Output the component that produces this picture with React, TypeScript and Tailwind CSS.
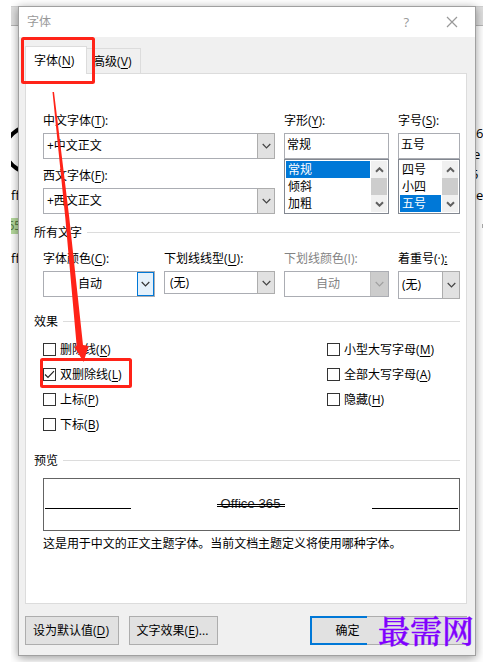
import type { ReactNode } from 'react';
import clsx from 'clsx';

interface LabelProps {
  text: string;
  hotkey?: string;
  suffix?: string;
}

interface ComboProps {
  value: string;
  className: string;
  valueClass?: string;
  state?: 'normal' | 'focused' | 'disabled';
}

interface ListProps {
  items: string[];
  selected: number;
  className: string;
}

interface CheckProps extends LabelProps {
  checked?: boolean;
}

function Label({ text, hotkey, suffix = ')' }: LabelProps) {
  return (
    <span className="whitespace-nowrap">
      {text}
      {hotkey && (
        <span className="tracking-[0.1px]">
          (<span className="underline underline-offset-2">{hotkey}</span>{suffix}
        </span>
      )}
    </span>
  );
}

function Chevron({ up = false, bold = false }: { up?: boolean; bold?: boolean }) {
  return (
    <svg width="9" height="6" viewBox="0 0 9 6" fill="none" stroke="currentColor" strokeWidth={bold ? 2 : 1.2}>
      <path d={up ? 'M1 4.8 L4.5 1.3 L8 4.8' : bold ? 'M1 1.2 L4.5 4.7 L8 1.2' : 'M0.7 1 L4.5 4.8 L8.3 1'} />
    </svg>
  );
}

function Combo({ value, className, valueClass = 'pl-[3px]', state = 'normal' }: ComboProps) {
  return (
    <div
      className={clsx(
        'flex border border-[#abadb3] bg-white',
        state === 'disabled' && 'text-[#838383]',
        className
      )}
    >
      <div className={clsx('flex flex-1 items-center', valueClass)}>{value}</div>
      <div
        className={clsx(
          'flex shrink-0 items-center justify-center',
          state === 'normal' && '-my-px -mr-px w-[18px] border border-[#adadad] bg-[#e1e1e1] text-[#444]',
          state === 'focused' && 'w-[17px] border border-[#0078d7] bg-[#e5f1fb] text-[#333]',
          state === 'disabled' && 'w-[18px] border-l border-[#bfbfbf] bg-[#ccc] text-[#a0a0a0]'
        )}
      >
        <Chevron />
      </div>
    </div>
  );
}

function ListBox({ items, selected, className }: ListProps) {
  return (
    <div className={clsx('flex h-[55px] border border-[#828790] bg-white p-px', className)}>
      <div className="flex-1 pr-px">
        {items.map((item, i) => (
          <div
            key={item}
            className={clsx('h-[17px] pl-0.5 leading-[17px]', i === selected && 'bg-[#0078d7] text-white')}
          >
            {item}
          </div>
        ))}
      </div>
      <div className="w-4 bg-[#f0f0f0] text-[#606060]">
        <div className="flex h-[17px] items-center justify-center pt-px"><Chevron up bold /></div>
        <div className="h-[17px] bg-[#cdcdcd]" />
        <div className="flex h-[17px] items-center justify-center"><Chevron bold /></div>
      </div>
    </div>
  );
}

function Section({ title, className }: { title: string; className?: string }) {
  return (
    <div className={clsx('flex h-4 items-center gap-[5px] pl-2 pr-[6px]', className)}>
      <span className="shrink-0 pt-[2px]">{title}</span>
      <div className="h-px flex-1 bg-[#dcdcdc]" />
    </div>
  );
}

function Check({ checked, ...label }: CheckProps) {
  return (
    <div className="flex h-[25px] items-center gap-1">
      <div className="flex size-[13px] items-center justify-center border border-[#333] bg-white">
        {checked && (
          <svg width="11" height="11" viewBox="0 0 11 11" fill="none" stroke="#222" strokeWidth="1.2">
            <path d="M1 5.5 L4 8.4 L10 2.2" />
          </svg>
        )}
      </div>
      <Label {...label} />
    </div>
  );
}

function Button({ children, className }: { children: ReactNode; className: string }) {
  return (
    <button className={clsx('flex h-[29px] items-center justify-center bg-[#e1e1e1]', className)}>
      {children}
    </button>
  );
}

function Backdrop() {
  return (
    <>
      <div className="absolute inset-x-0 top-0 h-5 border-y border-t-[#d0d0d0] border-b-[#b5b5b5] bg-[#dedede]" />
      <svg className="absolute left-0 top-[114px]" width="8" height="60" fill="none" stroke="#000" strokeWidth="4">
        <path d="M-2 18 Q2 12 10 8" />
        <path d="M-2 41 Q2 47 10 51" />
      </svg>
      <div className="absolute left-0 top-[181px] text-[13px]">ff</div>
      <div className="absolute left-0 top-[212px] h-4 w-2 bg-[#b5d99c]">
        <span className="absolute -left-1 -top-px text-[13px] tracking-tight text-[#567a43]">65</span>
      </div>
      <div className="absolute left-0 top-[244px] text-[13px]">ff</div>
      <div className="absolute left-[458px] top-[119px] text-[13px] tracking-tight">16</div>
      <div className="absolute left-[462px] top-[140px] text-[13px]">e</div>
      <div className="absolute left-[460px] top-[160px] text-[13px]">5</div>
      <div className="absolute left-[459px] top-[181px] text-[13px] tracking-tight">ce</div>
      <div className="absolute left-[471px] top-[218px] h-1 w-px bg-[#aaa]" />
    </>
  );
}

// Red boxes and arrow that point at the double strikethrough option
function Annotations() {
  return (
    <svg className="pointer-events-none absolute left-0 top-0" width="491" height="662" fill="none">
      <rect x="22.5" y="38.5" width="71" height="44" rx="1" stroke="#ff2318" strokeWidth="3" />
      <rect x="41.5" y="359.5" width="89" height="27" rx="1" stroke="#ff2318" strokeWidth="3" />
      <path d="M52.5 92 L54 92 L69.2 217 L83 345 L88.7 346 L83.5 362 L74.8 347.5 L76.6 345 L65.2 217 Z" fill="#ff2318" />
    </svg>
  );
}

export default function App() {
  return (
    <div className="relative h-[662px] w-[491px] overflow-hidden bg-white font-['Open_Sans','Noto_Sans_CJK_SC',sans-serif] text-xs leading-4 text-black">
      <div className="relative ml-[11px] h-[662px] w-[472px] overflow-hidden pl-[7px] pt-[6px]">
        <div className="absolute inset-x-0 top-[6px]">
          <Backdrop />
        </div>

        <div className="relative flex h-[650px] w-[458px] flex-col border border-[#a0a0a0] bg-[#f0f0f0] shadow-[0_2px_9px_rgba(0,0,0,0.4)]">
          <div className="flex h-[30px] shrink-0 items-center bg-white pl-2 text-[#999]">
            <span className="flex-1">字体</span>
            <span className="mr-[37px] text-[13px]">?</span>
            <svg className="mr-[17px]" width="12" height="12" viewBox="0 0 12 12" stroke="#999" strokeWidth="1.2">
              <path d="M1 1 L11 11 M11 1 L1 11" />
            </svg>
          </div>

          {/* Tabs */}
          <div className="flex h-9 items-end pl-[6px]">
            <div className="relative z-10 -mb-px flex h-7 w-[62px] items-center border border-b-0 border-[#dcdcdc] bg-white pl-2">
              <Label text="字体" hotkey="N" />
            </div>
            <div className="flex h-[25px] w-[54px] items-center border border-b-0 border-l-0 border-[#dcdcdc] pl-[6px] pt-[2px]">
              <Label text="高级" hotkey="V" />
            </div>
          </div>

          <div className="mx-[6px] h-[531px] w-[442px] shrink-0 border border-[#dcdcdc] bg-white">
            <div className="flex pl-[17px] pt-[39px]">
              <div className="mr-[9px] w-[232px]">
                <div className="h-5"><Label text="中文字体" hotkey="T" suffix="):" /></div>
                <Combo value="+中文正文" className="h-[26px]" valueClass="pl-[3px] pb-px" />
                <div className="h-[29px] pt-[9px]"><Label text="西文字体" hotkey="F" suffix="):" /></div>
                <Combo value="+西文正文" className="h-[26px]" valueClass="pl-[3px] pb-px" />
              </div>
              <div className="mr-[9px] w-[105px]">
                <div className="h-5"><Label text="字形" hotkey="Y" suffix="):" /></div>
                <div className="flex h-[26px] items-center border border-[#abadb3] pb-[2px] pl-[2px]">常规</div>
                <ListBox items={['常规', '倾斜', '加粗']} selected={0} className="w-[105px]" />
              </div>
              <div className="w-[62px]">
                <div className="h-5"><Label text="字号" hotkey="S" suffix="):" /></div>
                <div className="flex h-[26px] items-center border border-[#abadb3] pb-[2px] pl-[2px]">五号</div>
                <ListBox items={['四号', '小四', '五号']} selected={2} className="w-[62px]" />
              </div>
            </div>

            <Section title="所有文字" className="mt-[10px]" />
            <div className="flex items-start pl-[17px] pt-[11px]">
              <div className="mr-[9px] w-[112px]">
                <div className="h-5"><Label text="字体颜色" hotkey="C" suffix="):" /></div>
                <Combo value="自动" className="h-[26px]" valueClass="pl-[34px]" state="focused" />
              </div>
              <div className="mr-[9px] w-[111px]">
                <div className="h-5"><Label text="下划线线型" hotkey="U" suffix="):" /></div>
                <Combo value="(无)" className="h-[23px]" valueClass="pl-[5px]" />
              </div>
              <div className="mr-[9px] w-[105px]">
                <div className="h-5 text-[#838383]">下划线颜色(I):</div>
                <Combo value="自动" className="h-[26px]" valueClass="pl-[31px]" state="disabled" />
              </div>
              <div className="w-[62px]">
                <div className="h-5 whitespace-nowrap">着重号(·)<span className="underline">:</span></div>
                <Combo value="(无)" className="h-7" />
              </div>
            </div>

            <Section title="效果" className="mt-[14px]" />
            <div className="mt-2 flex h-[100px] pl-[17px]">
              <div className="w-[284px]">
                <Check text="删除线" hotkey="K" />
                <Check text="双删除线" hotkey="L" checked />
                <Check text="上标" hotkey="P" />
                <Check text="下标" hotkey="B" />
              </div>
              <div>
                <Check text="小型大写字母" hotkey="M" />
                <Check text="全部大写字母" hotkey="A" />
                <Check text="隐藏" hotkey="H" />
              </div>
            </div>

            <Section title="预览" className="mt-[15px]" />
            <div className="ml-[17px] mt-[10px] flex h-[53px] w-[417px] justify-between border border-[#646464] px-px">
              <div className="mt-[29px] h-px w-[86px] bg-black" />
              <div className="relative right-px mt-[17px] h-4 w-[68px] whitespace-nowrap text-center font-['Liberation_Sans',sans-serif] text-[13px] tracking-[0.1px] text-[#222]">
                Office 365
                <div className="absolute inset-x-0 top-[8px] h-[3px] border-y border-black" />
              </div>
              <div className="mt-[29px] h-px w-[86px] bg-black" />
            </div>
            <div className="ml-[17px] mt-[5px] tracking-[-0.05px]">这是用于中文的正文主题字体。当前文档主题定义将使用哪种字体。</div>
          </div>

          <div className="flex pl-[6px] pt-3">
            <Button className="mr-[10px] w-[94px] border border-[#adadad] pr-[2px]"><Label text="设为默认值" hotkey="D" /></Button>
            <Button className="mr-[92px] w-[89px] border border-[#adadad] pr-[2px]"><Label text="文字效果" hotkey="E" suffix=")..." /></Button>
            <Button className="w-[57px] border-2 border-r-0 border-[#0078d7] pl-4">确定</Button>
            <Button className="w-[100px] border-y border-[#adadad]">{null}</Button>
          </div>
        </div>
      </div>

      <Annotations />
      <div className="absolute left-[378px] top-[609px] whitespace-nowrap font-['Noto_Serif_CJK_SC','Noto_Sans_CJK_SC',serif] text-[32px] font-medium leading-10 text-[#8000ff] [-webkit-text-stroke:0.4px_#8000ff]">
        最需网
      </div>
    </div>
  );
}
